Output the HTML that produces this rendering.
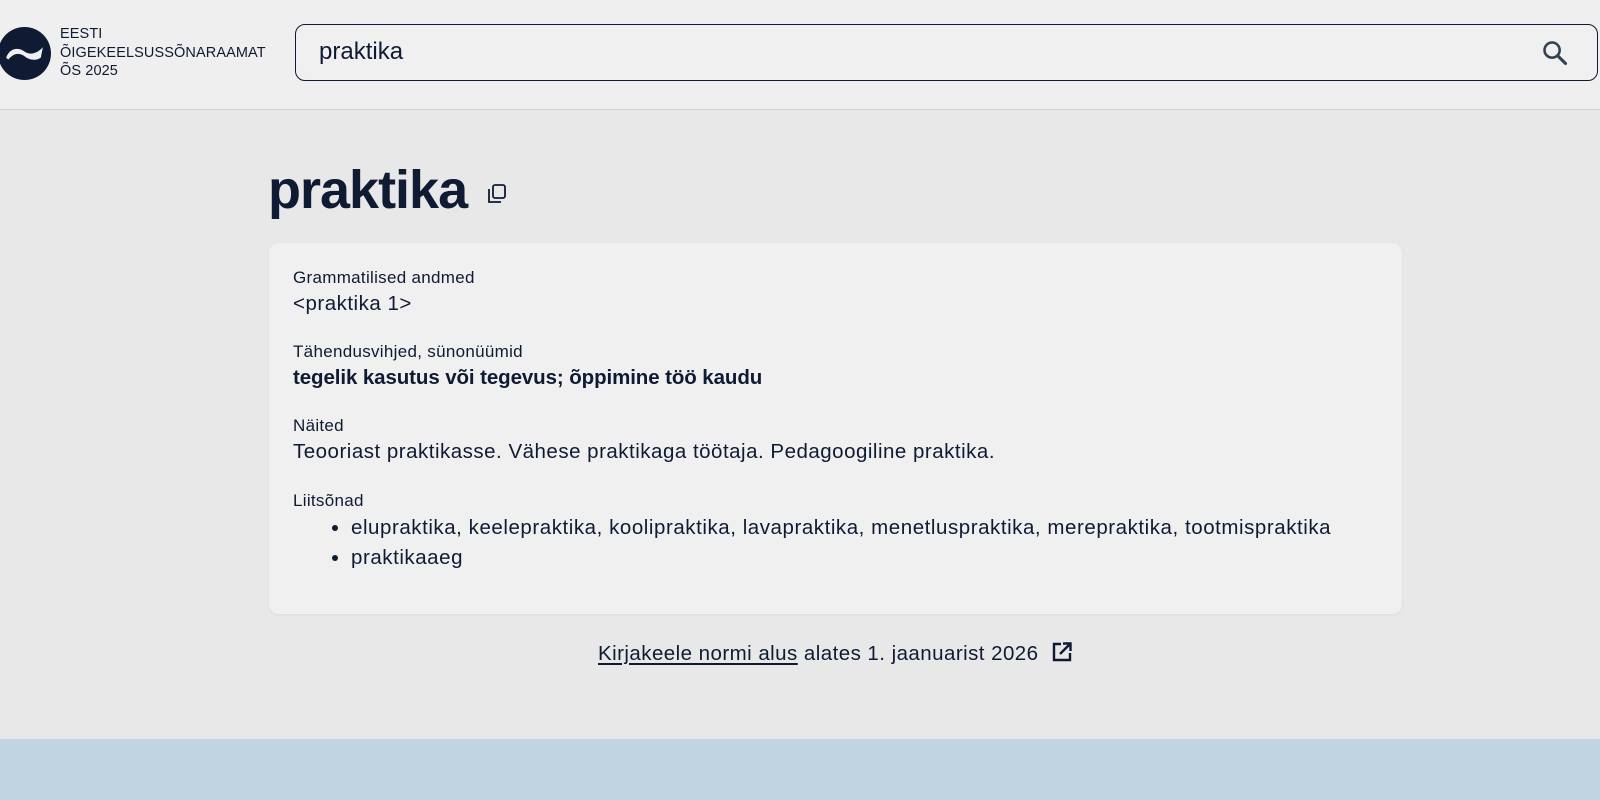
<!DOCTYPE html>
<html><head><meta charset="utf-8"><style>
*{margin:0;padding:0;box-sizing:border-box}
body{width:1600px;height:800px;overflow:hidden;background:#e8e8e8;font-family:"Liberation Sans",sans-serif;color:#0f1a33;position:relative}
.hdr{position:absolute;left:0;top:0;width:1600px;height:110px;background:#efefef;border-bottom:1px solid #c5d0dc}
.logo{position:absolute;left:-2px;top:27px;width:53px;height:53px;border-radius:50%;background:#0f1a33}
.lt{position:absolute;left:60px;top:25px;font-size:14.5px;line-height:18.5px;color:#0f1a33;letter-spacing:.1px}
.search{position:absolute;left:295px;top:24px;width:1303px;height:57px;border:1.5px solid #0f1a33;border-radius:10px;background:#f0f0f0}
.search span{position:absolute;left:23px;top:13px;font-size:24px}
.search svg{position:absolute;right:28px;top:14px}
h1{position:absolute;left:268px;top:159px;font-size:54px;font-weight:bold;letter-spacing:-1px}
.copy{position:absolute;left:487px;top:183px}
.card{position:absolute;left:269px;top:243px;width:1133px;height:371px;background:#f0f0f0;border-radius:10px;box-shadow:0 1px 3px rgba(0,0,0,.05)}
.l{position:absolute;left:24px;font-size:17px;letter-spacing:.3px}
.v{position:absolute;left:24px;font-size:20.5px;letter-spacing:.5px}
ul{position:absolute;left:82px;font-size:20.5px;line-height:29.6px;letter-spacing:.55px}
.foot{position:absolute;left:598px;top:641px;font-size:20.5px;letter-spacing:.45px}
.foot u{text-underline-offset:3px}
.bot{position:absolute;left:0;top:739px;width:1600px;height:61px;background:#c1d4e2}
</style></head><body>
<div class="hdr">
<div class="logo"><svg width="53" height="53" viewBox="0 0 52 52"><path d="M8 30 C12 20,20 20,26 24 C32 28,38 26,44 20 L42 30 C36 34,30 32,25 28 C20 25,15 26,10 32 Z" fill="#f0f0f0"/></svg></div>
<div class="lt">EESTI<br>ÕIGEKEELSUSSÕNARAAMAT<br>ÕS 2025</div>
<div class="search"><span>praktika</span><svg width="28" height="28" viewBox="0 0 24 24"><circle cx="9.5" cy="9.5" r="6.5" fill="none" stroke="#33404f" stroke-width="2.2"/><path d="M14.5 14.5 L21 21" stroke="#33404f" stroke-width="2.6" stroke-linecap="round"/></svg></div>
</div>
<h1>praktika</h1>
<svg class="copy" width="20" height="22" viewBox="0 0 20 22"><rect x="6" y="2" width="12" height="13" rx="2" fill="none" stroke="#0f1a33" stroke-width="1.8"/><path d="M2 6 V19 H14" fill="none" stroke="#0f1a33" stroke-width="1.8"/></svg>
<div class="card">
<div class="l" style="top:25px">Grammatilised andmed</div>
<div class="v" style="top:49px">&lt;praktika 1&gt;</div>
<div class="l" style="top:99px">Tähendusvihjed, sünonüümid</div>
<div class="v" style="top:123px;font-weight:bold;letter-spacing:-.1px">tegelik kasutus või tegevus; õppimine töö kaudu</div>
<div class="l" style="top:173px">Näited</div>
<div class="v" style="top:197px">Teooriast praktikasse. Vähese praktikaga töötaja. Pedagoogiline praktika.</div>
<div class="l" style="top:248px">Liitsõnad</div>
<ul style="top:270px"><li>elupraktika, keelepraktika, koolipraktika, lavapraktika, menetluspraktika, merepraktika, tootmispraktika</li><li>praktikaaeg</li></ul>
</div>
<div class="foot"><u>Kirjakeele normi alus</u> alates 1. jaanuarist 2026 <svg width="22" height="22" viewBox="0 0 22 22" style="vertical-align:-3px;margin-left:6px"><path d="M10 3 H3 V19 H19 V12" fill="none" stroke="#0f1a33" stroke-width="2.4"/><path d="M9 13 L19 3 M12 2.5 H19.5 V10" fill="none" stroke="#0f1a33" stroke-width="2.4"/></svg></div>
<div class="bot"></div>
</body></html>
